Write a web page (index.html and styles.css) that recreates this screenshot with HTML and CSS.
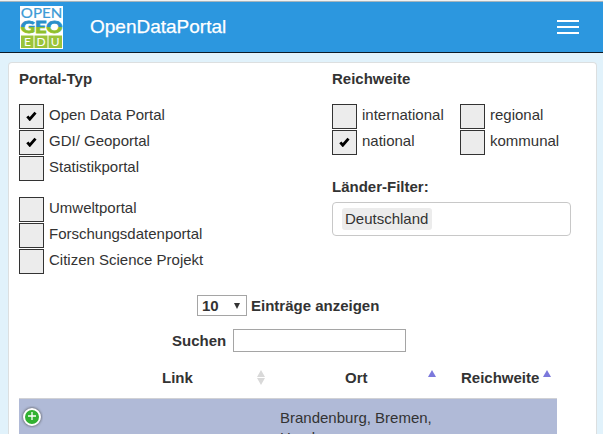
FILE: index.html
```html
<!DOCTYPE html>
<html lang="de">
<head>
<meta charset="utf-8">
<title>OpenDataPortal</title>
<link rel="stylesheet" href="styles.css">
</head>
<body>
<header class="navbar">
  <svg class="logo" width="43" height="43" viewBox="0 0 43 43">
    <defs>
      <linearGradient id="geo" gradientUnits="userSpaceOnUse" x1="0" y1="14" x2="0" y2="27">
        <stop offset=".5" stop-color="#2a8fc9"/>
        <stop offset=".58" stop-color="#8fbf2c"/>
      </linearGradient>
    </defs>
    <rect width="43" height="43" fill="#fff"/>
    <text x="0.8" y="11.5" class="logo-open" textLength="41.500" lengthAdjust="spacingAndGlyphs">OPEN</text>
    <text x="0.5" y="26.800" class="logo-geo" fill="url(#geo)" stroke="url(#geo)" stroke-width=".8" textLength="42" lengthAdjust="spacingAndGlyphs">GEO</text>
    <path d="M1 29.500h12.500v12.500H1zM14.500 29.500h13v12.500H14.500zM28.500 29.500H42v12.500H28.500z" fill="#9bc43a"/>
    <text x="4" y="40.300" class="logo-edu">E</text>
    <text x="16.600" y="40.300" class="logo-edu">D</text>
    <text x="30.800" y="40.300" class="logo-edu">U</text>
  </svg>
  <span class="brand">OpenDataPortal</span>
  <span class="burger"><i></i><i></i><i></i></span>
</header>
<main class="panel">
  <div class="filters">
    <section class="types">
      <h4>Portal-Typ</h4>
      <div class="checks">
        <label class="check"><span class="box"><svg class="tick" viewBox="0 0 11 10"><path d="M1.300 5.300 3.800 8.200 9.500 1.600"/></svg></span>Open Data Portal</label>
        <label class="check"><span class="box"><svg class="tick" viewBox="0 0 11 10"><path d="M1.300 5.300 3.800 8.200 9.500 1.600"/></svg></span>GDI/ Geoportal</label>
        <label class="check"><span class="box"></span>Statistikportal</label>
      </div>
      <div class="checks second">
        <label class="check"><span class="box"></span>Umweltportal</label>
        <label class="check"><span class="box"></span>Forschungsdatenportal</label>
        <label class="check"><span class="box"></span>Citizen Science Projekt</label>
      </div>
    </section>
    <section class="scope">
      <h4>Reichweite</h4>
      <div class="checks pairs">
        <label class="check"><span class="box"></span>international</label>
        <label class="check"><span class="box"></span>regional</label>
        <label class="check"><span class="box"><svg class="tick" viewBox="0 0 11 10"><path d="M1.300 5.300 3.800 8.200 9.500 1.600"/></svg></span>national</label>
        <label class="check"><span class="box"></span>kommunal</label>
      </div>
      <h4 class="country-title">Länder-Filter:</h4>
      <div class="country"><span class="tag">Deutschland</span></div>
    </section>
  </div>
  <div class="length"><span class="select">10<svg width="6" height="6" viewBox="0 0 6 6"><path d="M0 0h6L3 6z" fill="#333"/></svg></span>Einträge anzeigen</div>
  <div class="search">Suchen<span class="input"></span></div>
  <div class="table">
    <div class="row head">
      <span class="c1">Link<svg class="sort" width="8" height="15" viewBox="0 0 8 15"><path d="M0 7 4 0l4 7zM0 8h8l-4 7z" fill="#d9d9d9"/></svg></span>
      <span class="c2">Ort<svg class="sort" width="8" height="15" viewBox="0 0 8 15"><path d="M0 7 4 0l4 7z" fill="#7b78dc"/></svg></span>
      <span class="c3">Reichweite<svg class="sort" width="8" height="15" viewBox="0 0 8 15"><path d="M0 7 4 0l4 7z" fill="#7b78dc"/></svg></span>
    </div>
    <div class="row entry">
      <span class="expand-cell"><svg width="22" height="22" viewBox="0 0 22 22"><circle class="expand" cx="11" cy="11" r="8"/><path d="M11 6v8M7 10h8" stroke="#fff" stroke-width="1.300"/></svg></span>
      <span class="place">Brandenburg, Bremen,<br>Hamburg</span>
    </div>
  </div>
</main>
</body>
</html>
```

FILE: styles.css
```css
* { box-sizing: border-box; }
html { overflow: hidden; }
body {
  margin: 0;
  height: 434px;
  overflow: hidden;
  background: #e1f2fb;
  color: #333;
  font: 15px/20px "Liberation Sans", Arial, sans-serif;
  border-top: 1px solid #f1f1f1;
}
.navbar {
  display: flex;
  align-items: center;
  height: 52px;
  padding: 0 24px 0 20px;
  background: #2c97df;
  border-top: 1px solid #a5b4bd;
  border-bottom: 1px solid #0b1a26;
  color: #fff;
}
.logo { display: block; }
.logo-open { font: 14px Lato, sans-serif; fill: #3d9bd6; stroke: #3d9bd6; stroke-width: .2px; }
.logo-geo { font: 900 17px Lato, sans-serif; }
.logo-edu { font: 12px Lato, sans-serif; fill: #fff; }
.brand { margin-left: 27px; font-size: 19px; line-height: 24px; -webkit-text-stroke: .25px #fff; }
.burger { display: grid; gap: 4px; width: 22px; margin-left: auto; }
.burger i { height: 2px; background: #fff; }
.panel {
  width: 589px;
  height: 372px;
  overflow: hidden;
  margin: 9px 0 0 8px;
  padding: 6px 10px 0;
  background: #fff;
  border: 1px solid #dcdfe0;
  border-bottom: 0;
  border-radius: 4px 4px 0 0;
}
.filters { display: flex; height: 205px; }
.types { width: 313px; }
.scope { width: 239px; }
h4 { margin: 0; font-size: 15px; line-height: 20px; }
.checks { display: grid; gap: 1px; margin-top: 15px; }
.checks.second { margin-top: 16px; }
.pairs { grid-template-columns: 127px 111px; }
.check { display: flex; height: 25px; line-height: 22px; white-space: nowrap; }
.box {
  display: flex;
  justify-content: center;
  width: 25px;
  height: 25px;
  margin-right: 5px;
  padding-top: 6px;
  border: 1px solid #333;
  background: #ececec;
}
.tick { width: 11px; height: 10px; fill: none; stroke: #000; stroke-width: 2.800; }
.country-title { margin-top: 22px; }
.country {
  height: 34px;
  margin-top: 5px;
  padding: 5px 9px;
  border: 1px solid #c8c8c8;
  border-radius: 4px;
}
.tag { display: inline-block; height: 22px; padding: 0 4px 0 3px; line-height: 22px; background: #ececec; border-radius: 3px; }
.length, .search { display: flex; align-items: center; font-weight: bold; }
.length { height: 21px; margin: 21px 0 0 178px; }
.select {
  display: flex;
  align-items: center;
  justify-content: space-between;
  width: 50px;
  height: 21px;
  margin-right: 4px;
  padding: 0 6px 0 4px;
  border: 1px solid #a5a5a5;
}
.search { height: 23px; margin: 13px 0 0 153px; }
.input { width: 173px; height: 23px; margin-left: 7px; border: 1px solid #a5a5a5; }
.table { width: 538px; }
.row { display: flex; }
.head { height: 47px; padding-top: 16px; font-weight: bold; border-bottom: 1px solid #d0d1d5; }
.head span { display: flex; }
.c1 { width: 246px; padding-left: 143px; }
.c2 { width: 171px; padding-left: 80px; }
.c3 { width: 121px; padding-left: 25px; }
.sort { margin: 2px 0 0 auto; }
.c3 .sort { margin-right: 6px; }
.entry { height: 36px; overflow: hidden; background: #b0bad7; }
.expand-cell { width: 261px; padding: 7px 0 0 2px; }
.expand { fill: #31b131; stroke: #fff; stroke-width: 2px; filter: drop-shadow(0 0 1.500px #444); }
.place { padding-top: 9px; line-height: 20px; }
```
